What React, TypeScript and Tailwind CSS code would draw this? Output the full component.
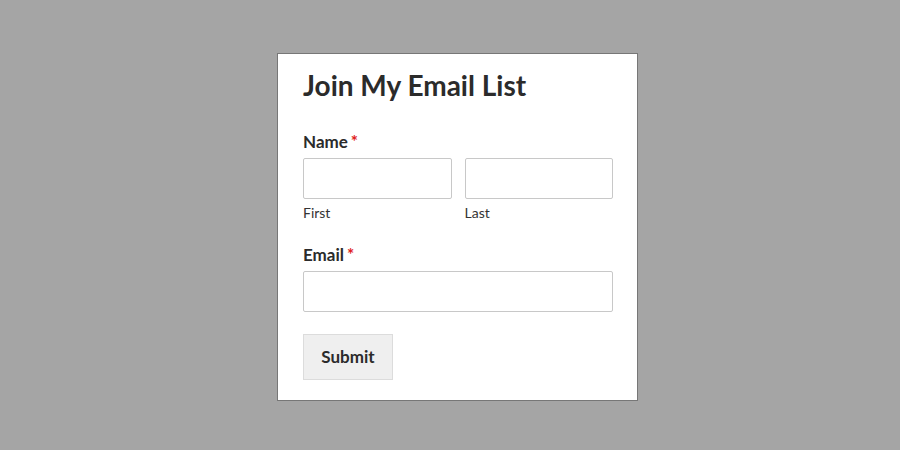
export default function App() {
  return (
    <div className="w-[900px] h-[450px] bg-[#a5a5a5] pt-[53px] pl-[277px]" style={{ fontFamily: 'Lato, "Noto Sans", sans-serif' }}>
      <div className="w-[361px] h-[348px] bg-white border border-[#777] pl-[25px] pr-[24px] pt-[11px]">
        <h1 className="text-[28px] font-bold text-[#2b2b2b] leading-[40px]">Join My Email List</h1>
        <div className="mt-[25px] text-[17px] font-bold text-[#2b2b2b] leading-[24px]">
          Name<span className="text-[#e02020] ml-[3px]">*</span>
        </div>
        <div className="mt-[4px] flex gap-[13px]">
          <div className="flex-1">
            <div className="h-[41px] border border-[#c8c8c8] rounded-[2px]" />
            <div className="mt-[5px] text-[14px] text-[#333] leading-[18px]">First</div>
          </div>
          <div className="flex-1">
            <div className="h-[41px] border border-[#c8c8c8] rounded-[2px]" />
            <div className="mt-[5px] text-[14px] text-[#333] leading-[18px]">Last</div>
          </div>
        </div>
        <div className="mt-[21px] text-[17px] font-bold text-[#2b2b2b] leading-[24px]">
          Email<span className="text-[#e02020] ml-[3px]">*</span>
        </div>
        <div className="mt-[4px] h-[41px] border border-[#c8c8c8] rounded-[2px]" />
        <button className="mt-[22px] w-[90px] h-[46px] bg-[#efefef] border border-[#dcdcdc] text-[17px] font-bold text-[#2b2b2b]">
          Submit
        </button>
      </div>
    </div>
  );
}
